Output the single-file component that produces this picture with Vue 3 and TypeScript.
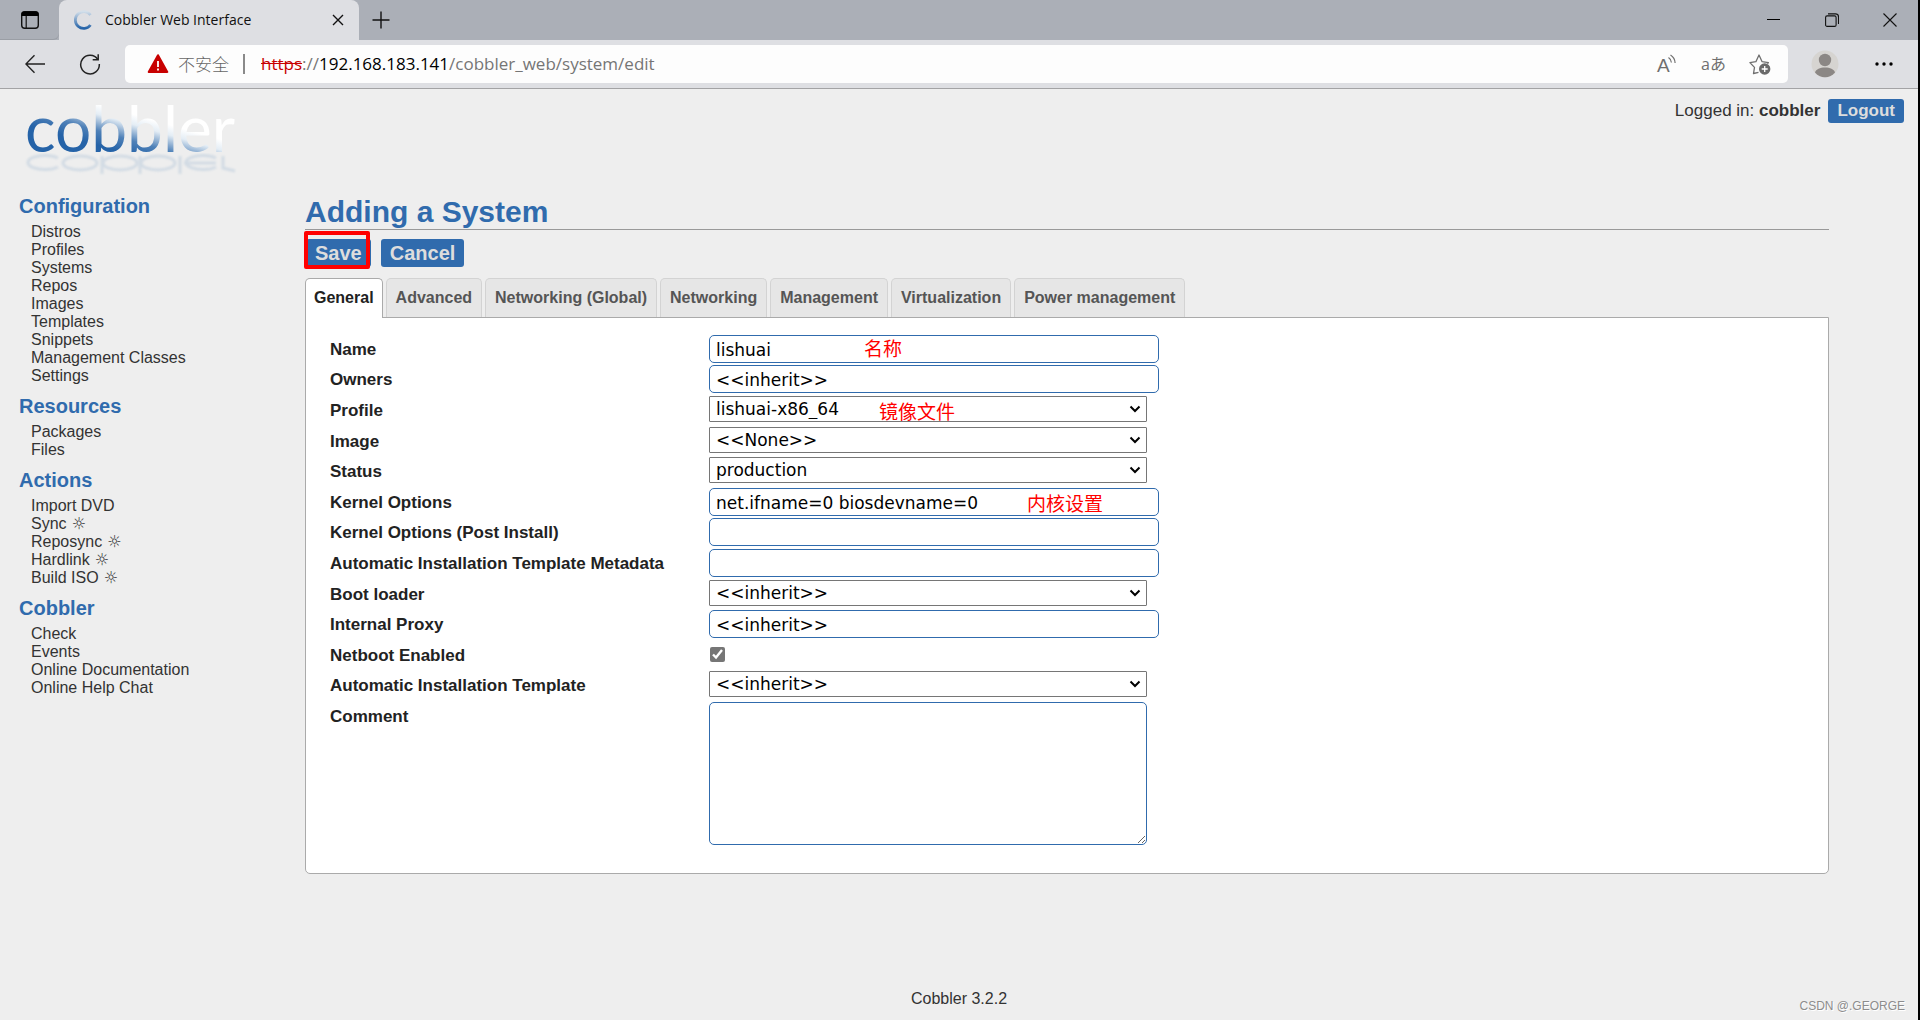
<script setup lang="ts">
import { ref } from 'vue'

interface MenuItem {
  label: string
  task?: boolean
}
interface MenuGroup {
  title: string
  items: MenuItem[]
}
interface Field {
  id: string
  label: string
  kind: 'text' | 'select' | 'checkbox' | 'textarea'
  value?: string
  note?: string
}

const menu: MenuGroup[] = [
  {
    title: 'Configuration',
    items: [
      { label: 'Distros' },
      { label: 'Profiles' },
      { label: 'Systems' },
      { label: 'Repos' },
      { label: 'Images' },
      { label: 'Templates' },
      { label: 'Snippets' },
      { label: 'Management Classes' },
      { label: 'Settings' },
    ],
  },
  { title: 'Resources', items: [{ label: 'Packages' }, { label: 'Files' }] },
  {
    title: 'Actions',
    items: [
      { label: 'Import DVD' },
      { label: 'Sync', task: true },
      { label: 'Reposync', task: true },
      { label: 'Hardlink', task: true },
      { label: 'Build ISO', task: true },
    ],
  },
  {
    title: 'Cobbler',
    items: [
      { label: 'Check' },
      { label: 'Events' },
      { label: 'Online Documentation' },
      { label: 'Online Help Chat' },
    ],
  },
]

const tabs = [
  'General',
  'Advanced',
  'Networking (Global)',
  'Networking',
  'Management',
  'Virtualization',
  'Power management',
]
const activeTab = ref('General')

const fields = ref<Field[]>([
  { id: 'name', label: 'Name', kind: 'text', value: 'lishuai', note: '名称' },
  { id: 'owners', label: 'Owners', kind: 'text', value: '<<inherit>>' },
  { id: 'profile', label: 'Profile', kind: 'select', value: 'lishuai-x86_64', note: '镜像文件' },
  { id: 'image', label: 'Image', kind: 'select', value: '<<None>>' },
  { id: 'status', label: 'Status', kind: 'select', value: 'production' },
  { id: 'kernel', label: 'Kernel Options', kind: 'text', value: 'net.ifname=0 biosdevname=0', note: '内核设置' },
  { id: 'kernel-post', label: 'Kernel Options (Post Install)', kind: 'text', value: '' },
  { id: 'meta', label: 'Automatic Installation Template Metadata', kind: 'text', value: '' },
  { id: 'boot', label: 'Boot loader', kind: 'select', value: '<<inherit>>' },
  { id: 'proxy', label: 'Internal Proxy', kind: 'text', value: '<<inherit>>' },
  { id: 'netboot', label: 'Netboot Enabled', kind: 'checkbox' },
  { id: 'template', label: 'Automatic Installation Template', kind: 'select', value: '<<inherit>>' },
  { id: 'comment', label: 'Comment', kind: 'textarea', value: '' },
])
</script>

<template>
  <div class="window">
    <div class="titlebar">
      <button class="icon-btn tab-actions" aria-label="Tab actions">
        <svg width="20" height="20" viewBox="0 0 20 20">
          <rect x="1.7" y="1.7" width="16.6" height="16.6" rx="3" fill="none" stroke="#111" stroke-width="1.4" />
          <path d="M1.5 6V4a2.5 2.5 0 0 1 2.5-2.5h12A2.5 2.5 0 0 1 18.5 4v2z" fill="#000" />
          <path d="M6.2 6v12" stroke="#111" stroke-width="1.2" />
        </svg>
      </button>
      <div class="page-tab">
        <svg width="20" height="20" viewBox="0 0 20 20">
          <defs>
            <linearGradient id="spin" x1="0" y1="0" x2="0" y2="1">
              <stop offset="0" stop-color="#d3dfea" />
              <stop offset="1" stop-color="#2563a8" />
            </linearGradient>
          </defs>
          <path d="M17.5 5A8.4 8.4 0 1 0 17.5 15" fill="none" stroke="url(#spin)" stroke-width="2.8" />
        </svg>
        <span class="page-title">Cobbler Web Interface</span>
        <button class="icon-btn" aria-label="Close tab">
          <svg width="12" height="12" viewBox="0 0 12 12"><path d="M1 1l10 10M11 1L1 11" stroke="#111" stroke-width="1.4" /></svg>
        </button>
      </div>
      <button class="icon-btn new-tab" aria-label="New tab">
        <svg width="18" height="18" viewBox="0 0 18 18"><path d="M9 .5v17M.5 9h17" stroke="#111" stroke-width="1.4" /></svg>
      </button>
      <div class="window-controls">
        <button class="icon-btn" aria-label="Minimize">
          <svg width="14" height="14" viewBox="0 0 14 14"><path d="M0 6.5h13" stroke="#000" /></svg>
        </button>
        <button class="icon-btn" aria-label="Restore">
          <svg width="14" height="14" viewBox="0 0 14 14" fill="none" stroke="#111" stroke-width="1.1">
            <rect x=".6" y="2.9" width="10.5" height="10.5" rx="1.5" />
            <path d="M3 .9h7.5a3 3 0 0 1 3 3V11" />
          </svg>
        </button>
        <button class="icon-btn" aria-label="Close">
          <svg width="14" height="14" viewBox="0 0 14 14"><path d="M.5.5l13 13M13.5.5l-13 13" stroke="#111" stroke-width="1.1" /></svg>
        </button>
      </div>
    </div>

    <div class="toolbar">
      <button class="icon-btn back" aria-label="Back">
        <svg width="20" height="20" viewBox="0 0 20 20" fill="none" stroke="#222" stroke-width="1.4">
          <path d="M20 10H1M9.5 1.3L.9 10l8.6 8.7" />
        </svg>
      </button>
      <button class="icon-btn reload" aria-label="Reload">
        <svg width="22" height="22" viewBox="0 0 22 22" fill="none" stroke="#222" stroke-width="1.5">
          <path d="M18.8 6.5A9.3 9.3 0 1 0 20.3 11" />
          <path d="M19.2 1.2v5.5h-5.5" />
        </svg>
      </button>
      <div class="address">
        <svg class="warn" width="22" height="20" viewBox="0 0 22 20">
          <path d="M11 1.2L20.3 18H1.7z" fill="#c80000" stroke="#c80000" stroke-width="2" stroke-linejoin="round" />
          <path d="M11 7v6M11 14.5v2" stroke="#fff" stroke-width="1.8" />
        </svg>
        <span class="insecure">不安全</span>
        <span class="divider"></span>
        <div class="url" role="textbox" aria-label="Address"><s>https</s>://<b>192.168.183.141</b>/cobbler_web/system/edit</div>
        <button class="icon-btn" aria-label="Read aloud">
          <svg width="22" height="22" viewBox="0 0 22 22">
            <text x="1" y="19" class="read-letter">A</text>
            <path d="M12.5 4.5c1.8 1.2 2.8 3 2.9 5M14.5 2c3 1.9 4.5 4.6 4.6 8" fill="none" stroke="#6f6f6f" stroke-width="1.2" />
          </svg>
        </button>
        <button class="icon-btn translate" aria-label="Translate">aあ</button>
        <button class="icon-btn" aria-label="Add to favorites">
          <svg width="22" height="22" viewBox="0 0 22 22">
            <path d="M9.5 19.3l-5 1.2 1-6.1L.9 9.6l6-.9L10 2l3.1 6.7 6.3.9-1 1.2" fill="none" stroke="#6f6f6f" stroke-width="1.3" stroke-linejoin="round" />
            <circle cx="15.7" cy="16" r="5.7" fill="#6a6a6a" />
            <path d="M15.7 13v6M12.7 16h6" stroke="#fff" stroke-width="1.3" />
          </svg>
        </button>
      </div>
      <button class="icon-btn avatar" aria-label="Profile">
        <svg width="28" height="28" viewBox="0 0 28 28">
          <circle cx="14" cy="14" r="13.5" fill="#d6d4d1" />
          <circle cx="14" cy="10" r="6.2" fill="#8b8785" />
          <path d="M4 22.500c1-3.500 5-5 10-5s9 1.500 10 5a13 13 0 0 1-20 0z" fill="#8b8785" />
        </svg>
      </button>
      <button class="icon-btn more" aria-label="Settings and more">
        <svg width="18" height="4" viewBox="0 0 18 4"><circle cx="2" cy="2" r="1.7" /><circle cx="9" cy="2" r="1.7" /><circle cx="16" cy="2" r="1.7" /></svg>
      </button>
    </div>

    <div class="page">
      <header class="page-head">
        <svg class="logo" width="224" height="92" viewBox="0 -10 224 92" role="img" aria-label="cobbler">
          <defs>
            <linearGradient id="logo-fill" gradientUnits="userSpaceOnUse" x1="96" y1="52" x2="107" y2="14">
              <stop offset="0" stop-color="#2563a8" />
              <stop offset=".35" stop-color="#4f81b8" />
              <stop offset=".75" stop-color="#e4edf5" />
              <stop offset="1" stop-color="#fff" />
            </linearGradient>
            <filter id="soft"><feGaussianBlur stdDeviation="1.2" /></filter>
          </defs>
          <text x="3" y="53" class="wordmark" fill="url(#logo-fill)">cobbler</text>
          <g fill="none" stroke="#a9bfd6" stroke-width="3" opacity=".4" filter="url(#soft)">
            <path d="M36 59a17 7 0 1 0 0 9" />
            <ellipse cx="58" cy="64" rx="17" ry="7" />
            <ellipse cx="98" cy="64" rx="17" ry="7" />
            <ellipse cx="136" cy="64" rx="17" ry="7" />
            <path d="M194 59a17 7 0 1 0 0 9M162 64h32M80 57v18M118 57v18M158 57v18M201 57v12l12 3" />
          </g>
        </svg>
        <div class="account">
          <span>Logged in: <strong>cobbler</strong></span>
          <button class="btn btn-logout">Logout</button>
        </div>
      </header>

      <div class="columns">
        <nav class="menu">
          <section v-for="group in menu" :key="group.title">
            <h2>{{ group.title }}</h2>
            <ul>
              <li v-for="item in group.items" :key="item.label">
                <a href="#">{{ item.label }}<span v-if="item.task" class="sun"> ☼</span></a>
              </li>
            </ul>
          </section>
        </nav>

        <main class="content">
          <h1>Adding a System</h1>
          <div class="actions">
            <div class="highlighted">
              <button class="btn">Save</button>
              <span class="marker"></span>
            </div>
            <button class="btn">Cancel</button>
          </div>

          <div class="tabs" role="tablist">
            <button
              v-for="tab in tabs"
              :key="tab"
              class="tab"
              :class="{ active: tab === activeTab }"
              role="tab"
              :aria-selected="tab === activeTab"
              @click="activeTab = tab"
            >{{ tab }}</button>
          </div>

          <form class="panel" @submit.prevent>
            <div v-for="field in fields" :key="field.id" class="row">
              <label :for="field.id">{{ field.label }}</label>
              <div class="control">
                <input v-if="field.kind === 'text'" :id="field.id" v-model="field.value" type="text" spellcheck="false" />
                <select v-else-if="field.kind === 'select'" :id="field.id" v-model="field.value">
                  <option :value="field.value">{{ field.value }}</option>
                </select>
                <input v-else-if="field.kind === 'checkbox'" :id="field.id" type="checkbox" checked />
                <textarea v-else :id="field.id" v-model="field.value"></textarea>
                <span v-if="field.note" class="note" :class="'note-' + field.id">{{ field.note }}</span>
              </div>
            </div>
          </form>
        </main>
      </div>

      <footer>
        <span>Cobbler 3.2.2</span>
        <span class="watermark">CSDN @.GEORGE</span>
      </footer>
    </div>
  </div>
</template>

<style>
body {
  margin: 0;
  background: #eee;
}
</style>

<style scoped>
* {
  box-sizing: border-box;
}
.window {
  display: flex;
  flex-direction: column;
  min-height: 100vh;
  border-right: 2px solid #000;
  background: #eee;
  color: #333;
  font: 16px/18px "Liberation Sans", Arial, sans-serif;
}
.icon-btn {
  display: flex;
  align-items: center;
  justify-content: center;
  padding: 0;
  border: 0;
  background: none;
}

/* Browser chrome */
.titlebar {
  display: flex;
  height: 40px;
  background: #abafb7;
  font-family: "Open Sans", "Noto Sans", sans-serif;
}
.tab-actions {
  width: 59px;
  border-radius: 0 0 6px 0;
  box-shadow: inset 0 -1px #9a9ea5;
}
.page-tab {
  display: flex;
  align-items: center;
  gap: 12px;
  width: 300px;
  padding: 0 15px 0 14px;
  border-radius: 8px 8px 0 0;
  background: #dedfe3;
}
.page-title {
  flex: 1;
  color: #111;
  font-size: 14px;
}
.new-tab {
  width: 43px;
  height: 40px;
}
.window-controls {
  display: flex;
  gap: 44px;
  margin-left: auto;
  padding-right: 21px;
}
.toolbar {
  display: flex;
  align-items: center;
  height: 49px;
  border-bottom: 1px solid #a3a3a5;
  background: #dedfe3;
  font-family: "Open Sans", "Noto Sans CJK SC", sans-serif;
}
.back {
  width: 20px;
  margin-left: 25px;
}
.reload {
  width: 22px;
  margin: 0 24px 0 34px;
}
.address {
  display: flex;
  flex: 1;
  align-items: center;
  height: 38px;
  padding: 0 17px 0 22px;
  border-radius: 5px;
  background: #fdfdfd;
  color: #757575;
  font-size: 17px;
}
.insecure {
  margin-left: 9px;
  color: #666;
  font-weight: 300;
  font-family: "Noto Sans CJK SC", sans-serif;
}
.divider {
  width: 2px;
  height: 20px;
  margin: 0 16px 0 14px;
  background: #8a8a8a;
}
.url {
  flex: 1;
}
.url s {
  color: #c80000;
}
.url b {
  color: #000;
  font-weight: 400;
}
.read-letter {
  fill: #6f6f6f;
  font-size: 19px;
  font-weight: 300;
}
.translate {
  margin: 0 23px;
  color: #6f6f6f;
  font: 16px/20px "Open Sans", "Noto Sans CJK JP", sans-serif;
}
.avatar {
  margin: 0 36px 0 23px;
}
.more {
  margin-right: 25px;
}

/* Page */
.page {
  display: flex;
  flex: 1;
  flex-direction: column;
}
.page-head {
  display: flex;
  justify-content: space-between;
  align-items: flex-start;
  height: 105px;
  padding: 0 14px 0 22px;
}
.logo {
  overflow: visible;
}
.wordmark {
  font: 64px Lato, sans-serif;
}
.account {
  display: flex;
  align-items: center;
  gap: 8px;
  margin-top: 10px;
  font-size: 17px;
}
.btn {
  height: 28px;
  padding: 0 9px;
  border: 0;
  border-radius: 3px;
  background: #306bad;
  color: #ddd;
  font: bold 20px/28px "Liberation Sans", Arial, sans-serif;
}
.btn-logout {
  height: 24px;
  font-size: 17px;
  line-height: 24px;
}
.columns {
  display: flex;
}
.menu {
  flex: none;
  width: 305px;
  padding-left: 19px;
}
.menu section {
  margin-bottom: 9px;
}
h2 {
  margin: 0 0 5px;
  color: #306bad;
  font-size: 20px;
  line-height: 24px;
}
ul {
  margin: 0;
  padding: 0 0 0 12px;
  list-style: none;
}
a {
  display: block;
  height: 18px;
  color: #333;
  text-decoration: none;
}
.sun {
  font-family: "DejaVu Sans", sans-serif;
}
.content {
  flex: 1;
  margin-right: 89px;
}
h1 {
  margin: 0;
  border-bottom: 1px solid #999;
  color: #306bad;
  font-size: 30px;
  line-height: 35px;
}
.actions {
  display: flex;
  gap: 10px;
  margin: 9px 0 11px 1px;
}
.highlighted {
  position: relative;
}
.marker {
  position: absolute;
  inset: -8px 1px -2px -2px;
  border: 4px solid #f00;
  border-radius: 2px;
}
.tabs {
  display: flex;
  gap: 3px;
  height: 39px;
}
.tab {
  height: 39px;
  padding: 0 9px;
  border: 1px solid #d3d3d3;
  border-bottom: 0;
  border-radius: 5px 5px 0 0;
  background: #e6e6e6;
  color: #555;
  font: bold 16px/18px "Liberation Sans", Arial, sans-serif;
}
.tab.active {
  z-index: 1;
  height: 40px;
  padding: 0 8px 1px;
  border-color: #aaa;
  background: #fff;
  color: #212121;
}
.panel {
  padding: 17px 24px 28px;
  border: 1px solid #aaa;
  border-radius: 0 0 5px 5px;
  background: #fff;
}
.row {
  display: flex;
  height: 30px;
}
.row:nth-child(5n + 2),
.row:nth-child(5n + 3),
.row:nth-child(5n) {
  height: 31px;
}
.row:last-child {
  height: auto;
}
label {
  width: 379px;
  padding-top: 6px;
  color: #222;
  font-weight: bold;
  font-size: 17px;
}
.control {
  position: relative;
}
input[type="text"],
select,
textarea {
  display: block;
  width: 438px;
  margin: 0;
  border: 1px solid #306bad;
  border-radius: 5px;
  background: #fff;
  color: #000;
  font: 17px/20px "DejaVu Sans", Verdana, sans-serif;
}
input[type="text"] {
  width: 450px;
  height: 28px;
  padding: 2px 6px 0;
}
select {
  height: 26px;
  padding: 0 6px;
  border-color: #767676;
  border-radius: 1px;
  appearance: none;
  background: #fff url("data:image/svg+xml,%3Csvg xmlns='http://www.w3.org/2000/svg' width='12' height='8'%3E%3Cpath d='M1.500 1.500L6 6l4.500-4.500' fill='none' stroke='%23000' stroke-width='2'/%3E%3C/svg%3E") no-repeat right 5px center;
}
textarea {
  height: 143px;
}
input[type="checkbox"] {
  display: block;
  width: 15px;
  height: 15px;
  margin: 6px 0 0 1px;
  accent-color: #767676;
}
.note {
  position: absolute;
  top: 0;
  left: 155px;
  color: #f00;
  font: 19px/26px "Noto Sans CJK SC", sans-serif;
  white-space: nowrap;
  pointer-events: none;
}
.note-profile {
  top: 2px;
  left: 170px;
}
.note-kernel {
  top: 2px;
  left: 318px;
}
footer {
  position: relative;
  margin-top: auto;
  padding-bottom: 12px;
  text-align: center;
}
.watermark {
  position: absolute;
  right: 13px;
  bottom: 5px;
  color: #8c8c8c;
  font-size: 12px;
  text-shadow: 1px 1px #fff;
}
</style>
